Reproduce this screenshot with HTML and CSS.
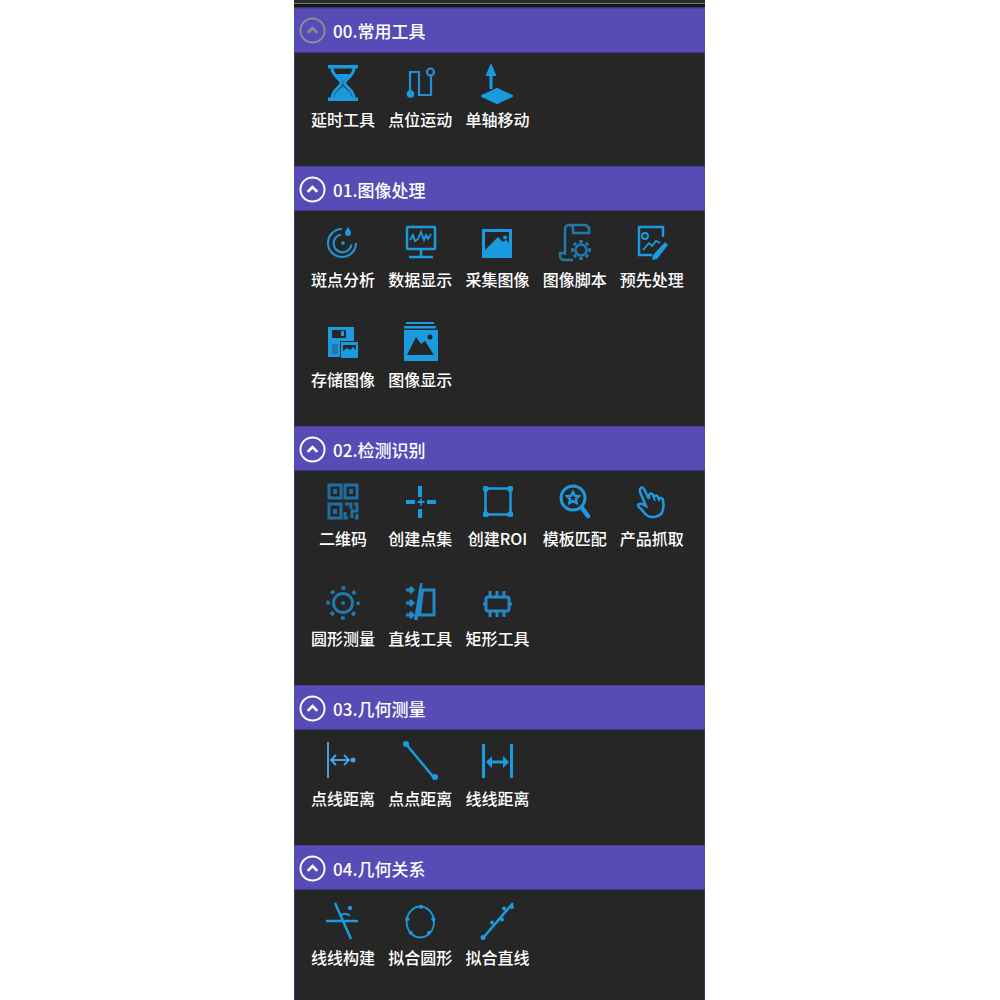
FILE: index.html
```html
<!DOCTYPE html>
<html lang="zh">
<head>
<meta charset="utf-8">
<title>工具箱</title>
<link rel="stylesheet" href="styles.css">
</head>
<body>
<main class="panel">
  <div class="topbar"></div>
  <section class="group g0">
    <header class="head"><span class="chev dim"><svg viewBox="0 0 28 28"><circle cx="14" cy="14" r="12.500"/><path class="cv" d="M9 16.500l5-5 5 5"/></svg></span><h2>00.常用工具</h2></header>
    <div class="tools">
      <div class="tool"><svg class="ic" viewBox="0 0 36 40"><path class="f" d="M3 1h30v3.500H3zM3 33.500h30V37H3z"/><path class="s b" d="M7 4c0 8 8 10 9.500 15C15 24 7 26 7 34M29 4c0 8-8 10-9.500 15C21 24 29 26 29 34"/><path class="f" d="M11 10h14c-2 4-5 5-7 8-2-3-5-4-7-8zM18 21c1 4 9 6 9 13H9c0-7 8-9 9-13z"/></svg><span>延时工具</span></div>
      <div class="tool"><svg class="ic" viewBox="0 0 36 40"><path class="m" d="M8 30V8h9v23h12V12"/><circle class="f" cx="8.500" cy="30" r="3.800"/><circle class="m" cx="28.500" cy="8" r="3.500"/></svg><span>点位运动</span></div>
      <div class="tool"><svg class="ic" viewBox="0 0 36 40"><path class="f" d="M12-1l5.500 13h-4v13h-3V12h-4z"/><path class="f rj" d="M3 32l15-7 15 7-15 7z"/></svg><span>单轴移动</span></div>
    </div>
  </section>
  <section class="group g1">
    <header class="head low"><span class="chev"><svg viewBox="0 0 28 28"><circle cx="14" cy="14" r="12.500"/><path class="cv" d="M9 16.500l5-5 5 5"/></svg></span><h2>01.图像处理</h2></header>
    <div class="tools">
      <div class="tool"><svg class="ic" viewBox="0 0 36 40"><path class="m" d="M17 7a14 14 0 1 0 14 14"/><path class="m" d="M16 12.500a9 9 0 1 0 10.500 10"/><circle class="f" cx="18" cy="21" r="1.800"/><path class="f" d="M23 5c1.500 2.500 3 4 3 6a3 3 0 0 1-6 0c0-2 1.500-3.500 3-6z"/></svg><span>斑点分析</span></div>
      <div class="tool"><svg class="ic" viewBox="0 0 36 40"><rect class="s" x="5" y="5" width="28" height="22" rx="1"/><path class="s" d="M19 27v8M7 35h24"/><path class="s t" d="M8 18l3-5 2 6 3-2 3-7 3 8 2-5 2 4 3-5"/></svg><span>数据显示</span></div>
      <div class="tool"><svg class="ic" viewBox="0 0 36 40"><path class="f" fill-rule="evenodd" d="M3 7h30v29H3zM6 10v18l7-7 6-6 5 5 3-2 3 3V10z"/><circle class="f" cx="26" cy="15.500" r="2"/></svg><span>采集图像</span></div>
      <div class="tool"><svg class="ic" viewBox="0 0 36 40"><path class="d" d="M8 33V7a4 4 0 0 1 4-4h17l3 3v5H16M8 7a4 4 0 0 1 8 0v5"/><path class="d" d="M9 31H3v3a4 4 0 0 0 4 4h9"/><circle class="d" cx="24" cy="28" r="5.500"/><path class="d th" d="M24 18v3M24 35v3M14 28h3M31 28h3M17 21l2 2M29 33l2 2M31 21l-2 2M19 33l-2 2"/></svg><span>图像脚本</span></div>
      <div class="tool"><svg class="ic" viewBox="0 0 36 40"><path class="s" d="M29 15V5H5v28h13"/><circle class="s t" cx="11" cy="14" r="3"/><path class="s t" d="M9 28l6-7 3 3 4-5 4 2"/><path class="f" d="M31 20l3 3-11 14-5 1 1-5z"/></svg><span>预先处理</span></div>
      <div class="tool"><svg class="ic" viewBox="0 0 36 40"><path class="f" fill-rule="evenodd" d="M3 5h26v14H15v16H3zM7 8v8h14V8zM16 9h3v5h-3zM7 22v10h6V22z"/><path class="d-f" d="M7 22h6v10H7z"/><path class="f" fill-rule="evenodd" d="M16 20h17v16H16zM18 23v6l4-3 3 2 3-3 3 3v-5z"/></svg><span>存储图像</span></div>
      <div class="tool"><svg class="ic" viewBox="0 0 36 40"><path class="f" d="M4 0h28v2H4zM2 4h32v2.500H2z"/><path class="f" fill-rule="evenodd" d="M2 8h34v31H2zM5 33h27l-9-14-4 3-5-7z"/><circle class="k" cx="28" cy="15" r="2.500"/></svg><span>图像显示</span></div>
    </div>
  </section>
  <section class="group g2">
    <header class="head low"><span class="chev"><svg viewBox="0 0 28 28"><circle cx="14" cy="14" r="12.500"/><path class="cv" d="M9 16.500l5-5 5 5"/></svg></span><h2>02.检测识别</h2></header>
    <div class="tools">
      <div class="tool"><svg class="ic" viewBox="0 0 36 40"><path class="q" d="M4 3h12v13H4zM20 3h12v13H20zM4 22h12v14H4zM20 22h6v5M29 22h3v7h-5v7M20 30v6h3M32 32v4h-2"/><path class="q-f" d="M8 7h4v5H8zM24 7h4v5h-4zM8 27h4v5H8z"/></svg><span>二维码</span></div>
      <div class="tool"><svg class="ic" viewBox="0 0 36 40"><path class="f" d="M16 4h4v11h-4zM16 27h4v9h-4zM4 18h9v4H4zM25 18h9v4h-9z"/><path class="s t" d="M19 16.500v7M15.500 20h7"/></svg><span>创建点集</span></div>
      <div class="tool"><svg class="ic" viewBox="0 0 36 40"><rect class="s" x="6.500" y="6.500" width="25" height="26"/><rect class="f" x="4" y="4" width="5.500" height="5.500" rx="1.500"/><rect class="f" x="28.500" y="4" width="5.500" height="5.500" rx="1.500"/><rect class="f" x="4" y="29.500" width="5.500" height="5.500" rx="1.500"/><rect class="f" x="28.500" y="29.500" width="5.500" height="5.500" rx="1.500"/></svg><span>创建ROI</span></div>
      <div class="tool"><svg class="ic" viewBox="0 0 36 40"><circle class="s b" cx="16" cy="16" r="12"/><path class="s th2" d="M25 26l6 8"/><path class="s" d="M16 10l1.800 3.700 4 .5-2.900 2.800.7 4-3.600-1.900-3.600 1.900.7-4-2.900-2.800 4-.5z"/></svg><span>模板匹配</span></div>
      <div class="tool"><svg class="ic" viewBox="0 0 36 40"><path class="s" d="M6 7c1-2 3-2 4 0l5 10 0-4c1-2 3-2 4 0l1 2c1-2 3-2 4 0l1 2c1-1.500 4-1 4 1 1 6 1 10-2 14-3 3-9 4-13 2-4-2-5-6-8-8-2-1-3-4 0-4 2-1 4 1 6 2L6 10c0-1-.5-2 0-3z"/><path class="s t" d="M19 13l2 6M24 15l1 4"/></svg><span>产品抓取</span></div>
      <div class="tool"><svg class="ic" viewBox="0 0 36 40"><circle class="d b" cx="18" cy="21" r="9.500"/><circle class="d-f" cx="18" cy="21" r="2"/><circle class="dots" cx="18" cy="21" r="15"/></svg><span>圆形测量</span></div>
      <div class="tool"><svg class="ic" viewBox="0 0 36 40"><path class="g b" d="M19 8h13v25H15"/><path class="f2" d="M18 1h2.500l-5 37H12z"/><path class="f2" d="M17 8h5l-3 25h-5z"/><path class="g b" d="M4 8h7M8 5l3 3-3 3M4 21h7M8 18l3 3-3 3M4 33h7M8 30l3 3-3 3"/></svg><span>直线工具</span></div>
      <div class="tool"><svg class="ic" viewBox="0 0 36 40"><rect class="g b" x="7" y="15" width="23" height="14" rx="2"/><path class="g b" d="M4 22h3M30 22h3M11 9v5M18 9v5M25 9v5M11 30v5M18 30v5M25 30v5"/></svg><span>矩形工具</span></div>
    </div>
  </section>
  <section class="group g3">
    <header class="head low"><span class="chev"><svg viewBox="0 0 28 28"><circle cx="14" cy="14" r="12.500"/><path class="cv" d="M9 16.500l5-5 5 5"/></svg></span><h2>03.几何测量</h2></header>
    <div class="tools">
      <div class="tool"><svg class="ic" viewBox="0 0 36 40"><path class="l" d="M3 1v36"/><path class="l" d="M7 19h16M11 14l-5 5 5 5M19 14l5 5-5 5"/><circle class="l-f" cx="28" cy="19" r="2.500"/></svg><span>点线距离</span></div>
      <div class="tool"><svg class="ic" viewBox="0 0 36 40"><path class="s" d="M4 3l29 35"/><circle class="f" cx="4" cy="3" r="3"/><circle class="f" cx="33" cy="36" r="3"/></svg><span>点点距离</span></div>
      <div class="tool"><svg class="ic" viewBox="0 0 36 40"><path class="f" d="M3 3h3v34H3zM31 3h3v34h-3zM7 21l6-6v4.500h11V15l6 6-6 6v-4.500H13V27z"/></svg><span>线线距离</span></div>
    </div>
  </section>
  <section class="group g4">
    <header class="head low"><span class="chev"><svg viewBox="0 0 28 28"><circle cx="14" cy="14" r="12.500"/><path class="cv" d="M9 16.500l5-5 5 5"/></svg></span><h2>04.几何关系</h2></header>
    <div class="tools">
      <div class="tool"><svg class="ic" viewBox="0 0 36 40"><path class="s" d="M1 20h32M10 2l16 36"/><path class="s t" d="M15 16a6 6 0 0 1 10-1"/><circle class="f" cx="25" cy="7" r="2.200"/></svg><span>线线构建</span></div>
      <div class="tool"><svg class="ic" viewBox="0 0 36 40"><ellipse class="s t" cx="18.300" cy="21" rx="13.700" ry="15.500"/><circle class="f" cx="19" cy="5.700" r="2"/><circle class="f" cx="5.300" cy="18.300" r="2"/><circle class="f" cx="31.300" cy="18.300" r="2"/><circle class="f" cx="8.700" cy="31.700" r="2"/><circle class="f" cx="27" cy="31.700" r="2"/></svg><span>拟合圆形</span></div>
      <div class="tool"><svg class="ic" viewBox="0 0 36 40"><path class="s" d="M4 37L34 2"/><circle class="f" cx="4" cy="36.500" r="2.500"/><circle class="f" cx="13" cy="21.500" r="2"/><circle class="f" cx="23" cy="18.500" r="2"/><circle class="f" cx="25" cy="7.500" r="2"/><circle class="f" cx="33" cy="6" r="2"/></svg><span>拟合直线</span></div>
    </div>
  </section>
</main>
</body>
</html>
```
FILE: styles.css
```css
* { box-sizing: border-box; }
html, body { margin: 0; padding: 0; background: #fff; }
body { height: 1000px; overflow: hidden; }
.panel {
  width: 411px; height: 1000px; margin-left: 294px;
  background: #262626;
  border-left: 1px solid #3a3170; border-right: 1px solid #3a3170;
  font-family: "Noto Sans CJK SC", "Liberation Sans", sans-serif;
}
.topbar {
  height: 8px; margin: 0 -1px;
  background: linear-gradient(#2a2a2a 0 3px, #777 3px 4px, #151515 4px 7px, #3b3480 7px 8px);
}
.group { display: flex; flex-direction: column; }
.g0 { height: 158px; }
.g1 { height: 260px; }
.g2 { height: 259px; }
.g3 { height: 160px; }
.head {
  height: 45px; background: #574bb5; margin: 0 -1px;
  border-top: 1px solid #4a4098; border-bottom: 1px solid #3f3690;
  display: flex; align-items: center; padding-left: 5px; gap: 7px;
}
.head.low { padding-top: 2px; }
.chev { width: 27px; height: 27px; display: block; }
.chev svg { width: 27px; height: 27px; display: block; fill: none; stroke: #fff; stroke-width: 2; }
.chev .cv { stroke-width: 2.800; }
.chev.dim svg { stroke: #8f8b98; }
h2 { margin: 0; color: #fff; font-size: 17px; font-weight: 500; line-height: 26px; }
.tools { display: grid; grid-template-columns: repeat(5, 77.200px); grid-auto-rows: 100px; padding: 11px 0 0 9.500px; }
.tool { display: flex; flex-direction: column; align-items: center; color: #fff; font-size: 16px; font-weight: 500; line-height: 22px; }
.tool span { white-space: nowrap; margin-top: 5px; }
.g0 .tool span { margin-top: 4px; }
.g1 .tool span, .g3 .tool span { margin-top: 6px; }
.ic { width: 36px; height: 40px; display: block; overflow: visible; }
.f { fill: #1a9be0; }
.f2 { fill: #2388c8; }
.rj { stroke: #1a9be0; stroke-width: 2; stroke-linejoin: round; }
.s { fill: none; stroke: #1a9be0; stroke-width: 2.500; }
.m { fill: none; stroke: #2590d0; stroke-width: 2.200; }
.d { fill: none; stroke: #2179ae; stroke-width: 2.500; }
.d-f { fill: #2179ae; }
.g { fill: none; stroke: #2388c8; stroke-width: 2.500; }
.q { fill: none; stroke: #1f6f9e; stroke-width: 3; }
.q-f { fill: #1f6f9e; }
.l { fill: none; stroke: #4a9fde; stroke-width: 2; }
.l-f { fill: #4a9fde; }
.k { fill: #262626; }
.t { stroke-width: 1.800; }
.b { stroke-width: 3; }
.th { stroke-width: 3.500; }
.th2 { stroke-width: 4.500; stroke-linecap: round; }
.dots { fill: none; stroke: #2179ae; stroke-width: 3.500; stroke-dasharray: 4 7.780; stroke-dashoffset: 2; }
```
